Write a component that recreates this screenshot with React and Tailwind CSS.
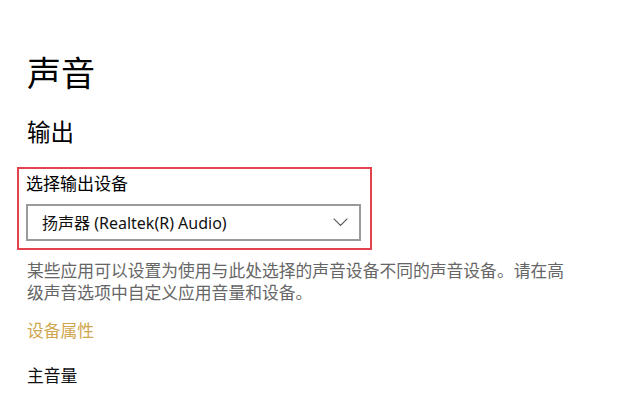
export default function App() {
  const font = { fontFamily: '"Noto Sans", "Noto Sans CJK SC", sans-serif' };
  return (
    <div className="w-[630px] h-[400px] bg-white overflow-hidden pl-[27px]" style={font}>
      <h1 className="mt-[53px] text-[34px] leading-[40px] text-black font-normal">声音</h1>
      <h2 className="mt-[23px] text-[23.5px] leading-[32px] text-black font-normal">输出</h2>
      <div className="mt-[19px] -ml-[10px] w-[355px] border-2 border-[#e2434d] pl-[7px] pr-[9px] pt-[3px] pb-[7px]">
        <div className="text-[17px] leading-[24px] text-black">选择输出设备</div>
        <div className="mt-[8px] h-[37px] border-2 border-[#9a9a9a] flex items-center justify-between pl-[14px] pr-[10px]">
          <span className="text-[16px] leading-[24px] text-[#111]">扬声器 (Realtek(R) Audio)</span>
          <svg width="15" height="9" viewBox="0 0 15 9" className="mr-[1px]">
            <path d="M0.7 0.7 L7.5 7.5 L14.3 0.7" fill="none" stroke="#555" strokeWidth="1.1" />
          </svg>
        </div>
      </div>
      <p className="mt-[10px] w-[545px] text-[16.8px] leading-[22px] text-[#666]">
        某些应用可以设置为使用与此处选择的声音设备不同的声音设备。请在高级声音选项中自定义应用音量和设备。
      </p>
      <div className="mt-[15px] text-[16.8px] leading-[24px] text-[#d1a650]">设备属性</div>
      <div className="mt-[21px] text-[16.8px] leading-[24px] text-[#111]">主音量</div>
    </div>
  );
}
